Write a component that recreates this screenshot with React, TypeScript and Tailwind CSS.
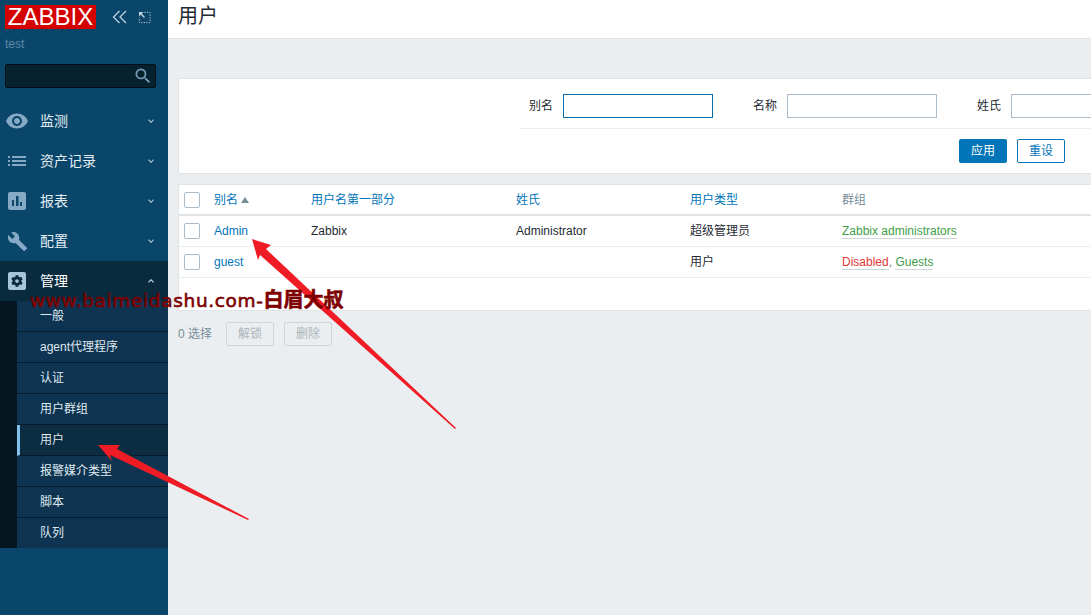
import React from 'react';
import { MdRemoveRedEye, MdBuild, MdSearch, MdKeyboardArrowDown, MdKeyboardArrowUp } from 'react-icons/md';
import { FaCog } from 'react-icons/fa';

const FONT = '[font-family:"Liberation_Sans","Noto_Sans_CJK_SC",sans-serif]';

function ListIcon() {
  return (
    <svg viewBox="0 0 18 10" className="w-[18px] h-[10px] text-[#85aac5]" fill="currentColor">
      <rect x="0" y="0" width="2" height="2" />
      <rect x="4" y="0" width="14" height="2" />
      <rect x="0" y="4" width="2" height="2" />
      <rect x="4" y="4" width="14" height="2" />
      <rect x="0" y="8" width="2" height="2" />
      <rect x="4" y="8" width="14" height="2" />
    </svg>
  );
}

function ReportIcon() {
  return (
    <svg viewBox="0 0 18 18" className="w-[18px] h-[18px] text-[#85aac5]">
      <rect width="18" height="18" rx="2" fill="currentColor" />
      <path d="M4 8h2v6H4zM8 4h2.500v10H8zM12 10h2v4h-2z" fill="#0a466a" />
    </svg>
  );
}

const MENU = [
  { label: '监测', icon: <MdRemoveRedEye className="w-6 h-6 text-[#85aac5]" /> },
  { label: '资产记录', icon: <ListIcon /> },
  { label: '报表', icon: <ReportIcon /> },
  { label: '配置', icon: <MdBuild className="w-[21px] h-[21px] text-[#85aac5]" /> },
];

const SUB = ['一般', 'agent代理程序', '认证', '用户群组', '用户', '报警媒介类型', '脚本', '队列'];

const COLS = 'grid grid-cols-[35px_97px_205px_174px_152px_1fr] items-center';

function Checkbox() {
  return <div className="w-4 h-4 bg-white border border-[#acbbc7] rounded-[2px] ml-[5px]" />;
}

function Sidebar() {
  return (
    <aside className="w-[168px] shrink-0 bg-[#0a466a] flex flex-col">
      <div className="flex items-center pl-[5px] pt-[5px] h-[29px]">
        <div className="w-[91px] h-6 bg-[#d40000] text-white text-2xl leading-6 text-center">ZABBIX</div>
        <svg viewBox="0 0 16 16" className="w-4 h-4 ml-4 text-[#bdd0de]" fill="none" stroke="currentColor" strokeWidth="1.3">
          <path d="M7.5 2 1.5 8l6 6M14 2 8 8l6 6" />
        </svg>
        <svg viewBox="0 0 14 14" className="w-[13px] h-[13px] ml-[10px] text-[#bdd0de]" fill="none" stroke="currentColor">
          <path d="M7 1.5h6v11H1.5V7" strokeDasharray="1.4 1.4" />
          <path d="M1 1h5L1 6z" fill="currentColor" stroke="none" />
          <path d="M3 3l4 4" strokeWidth="1.6" />
        </svg>
      </div>
      <div className="pl-[5px] mt-[7px] h-[17px] text-xs leading-[17px] text-[#5e8aa8]">test</div>
      <div className="mx-[5px] mt-[11px] w-[151px] h-6 bg-[#07222f] border border-[#031019] rounded-[2px] flex items-center justify-end pr-[2px]">
        <MdSearch className="w-5 h-5 text-[#769cb9]" />
      </div>
      <nav className="mt-[13px]">
        {MENU.map((m) => (
          <div key={m.label} className="h-10 flex items-center">
            <div className="w-10 flex justify-center pr-[6px]">{m.icon}</div>
            <span className="text-sm text-[#e3edf3]">{m.label}</span>
            <MdKeyboardArrowDown className="ml-auto mr-[11px] w-3 h-3 text-[#b4c8d6]" />
          </div>
        ))}
        <div className="h-10 flex items-center bg-[#0a2a3e]">
          <div className="w-10 flex justify-center pr-[6px]">
            <div className="w-[18px] h-[18px] rounded-[2px] bg-[#a6c5db] flex items-center justify-center">
              <FaCog className="w-3 h-3 text-[#0a2a3e]" />
            </div>
          </div>
          <span className="text-sm text-white">管理</span>
          <MdKeyboardArrowUp className="ml-auto mr-[11px] w-3 h-3 text-[#d8e4ec]" />
        </div>
        <div className="bg-[#04161f] pl-[17px]">
          {SUB.map((s) => (
            <div
              key={s}
              className={`h-[31px] flex items-center border-b border-[#061c2b] text-xs text-[#dfe9ef] last:border-b-0 last:h-[30px] ${
                s === '用户' ? 'bg-[#0b2c41] border-l-[3px] border-l-[#7fc1ec] pl-5' : 'bg-[#0f3451] pl-[23px]'
              }`}
            >
              {s}
            </div>
          ))}
        </div>
      </nav>
    </aside>
  );
}

function Field({ label, focus }: { label: string; focus?: boolean }) {
  return (
    <div className="flex items-center shrink-0 gap-[10px] mr-10">
      <span className="text-xs text-[#1f2c33] w-6">{label}</span>
      <div className={`w-[150px] h-6 bg-white border ${focus ? 'border-[#0b6ea8]' : 'border-[#acbbc7]'}`} />
    </div>
  );
}

function Arrows() {
  return (
    <svg className="absolute left-0 top-0 w-[1091px] h-[615px] pointer-events-none" viewBox="0 0 1091 615">
      <polygon fill="#ef1c25" points="252,239 271,245 266,249 456,428 455,429 260,255 258,260" />
      <polygon fill="#ef1c25" points="98,445 120,445 117,449 249,519 248,520 110,455 112,461" />
    </svg>
  );
}

export default function App() {
  return (
    <div className={`relative w-[1091px] h-[615px] overflow-hidden flex bg-[#ebeef0] ${FONT}`}>
      <Sidebar />
      <main className="flex-1 min-w-0">
        <header className="h-[39px] bg-white border-b border-[#dfe4e7] pl-[10px] text-xl leading-[32px] text-[#1f2c33]">用户</header>
        <section className="ml-[10px] mt-[39px] h-[96px] bg-white border border-r-0 border-[#dfe4e7] overflow-hidden">
          <div className="ml-[340px] h-[50px] border-b border-[#ebeef0] pt-[15px] pl-[10px] flex items-start w-[700px]">
            <Field label="别名" focus />
            <Field label="名称" />
            <Field label="姓氏" />
          </div>
          <div className="flex justify-end gap-[10px] pt-[10px] pr-[26px]">
            <button className="w-12 h-6 rounded-[2px] bg-[#0275b8] text-xs text-white">应用</button>
            <button className="w-12 h-6 rounded-[2px] border border-[#0275b8] bg-white text-xs text-[#0275b8]">重设</button>
          </div>
        </section>
        <section className="ml-[10px] mt-[10px] h-[127px] bg-white border border-r-0 border-[#dfe4e7] text-xs">
          <div className={`${COLS} h-[31px] border-b-2 border-[#dfe4e7] text-[#0275b8]`}>
            <Checkbox />
            <span className="flex items-center gap-[3px]">
              别名
              <span className="w-0 h-0 border-x-[4px] border-x-transparent border-b-[6px] border-b-[#768d99]" />
            </span>
            <span>用户名第一部分</span>
            <span>姓氏</span>
            <span>用户类型</span>
            <span className="text-[#768d99]">群组</span>
          </div>
          <div className={`${COLS} h-[31px] border-b border-[#ebeef0] text-[#1f2c33]`}>
            <Checkbox />
            <span className="text-[#0275b8]">Admin</span>
            <span>Zabbix</span>
            <span>Administrator</span>
            <span>超级管理员</span>
            <span>
              <span className="text-[#429e47] border-b border-[#cdd6db]">Zabbix administrators</span>
            </span>
          </div>
          <div className={`${COLS} h-[31px] border-b border-[#ebeef0] text-[#1f2c33]`}>
            <Checkbox />
            <span className="text-[#0275b8]">guest</span>
            <span />
            <span />
            <span>用户</span>
            <span className="text-[#768d99]">
              <span className="text-[#e33734] border-b border-[#cdd6db]">Disabled</span>
              <span>, </span>
              <span className="text-[#429e47] border-b border-[#cdd6db]">Guests</span>
            </span>
          </div>
        </section>
        <div className="ml-[10px] mt-[11px] flex items-center text-xs">
          <span className="w-[48px] text-[#768d99]">0 选择</span>
          <button className="w-12 h-6 rounded-[2px] border border-[#cfd6da] text-[#acb5ba]">解锁</button>
          <button className="w-12 h-6 ml-[10px] rounded-[2px] border border-[#cfd6da] text-[#acb5ba]">删除</button>
        </div>
      </main>
      <Arrows />
      <div className='absolute left-[30px] top-[288px] h-6 leading-6 whitespace-nowrap text-[#7d0000] text-[18.5px] tracking-[0.65px] [-webkit-text-stroke:0.6px_#7d0000] [font-family:"DejaVu_Sans","Noto_Sans_CJK_SC",sans-serif]'>
        www.baimeidashu.com-<span className="text-[20px] font-bold tracking-normal">白眉大叔</span>
      </div>
    </div>
  );
}
